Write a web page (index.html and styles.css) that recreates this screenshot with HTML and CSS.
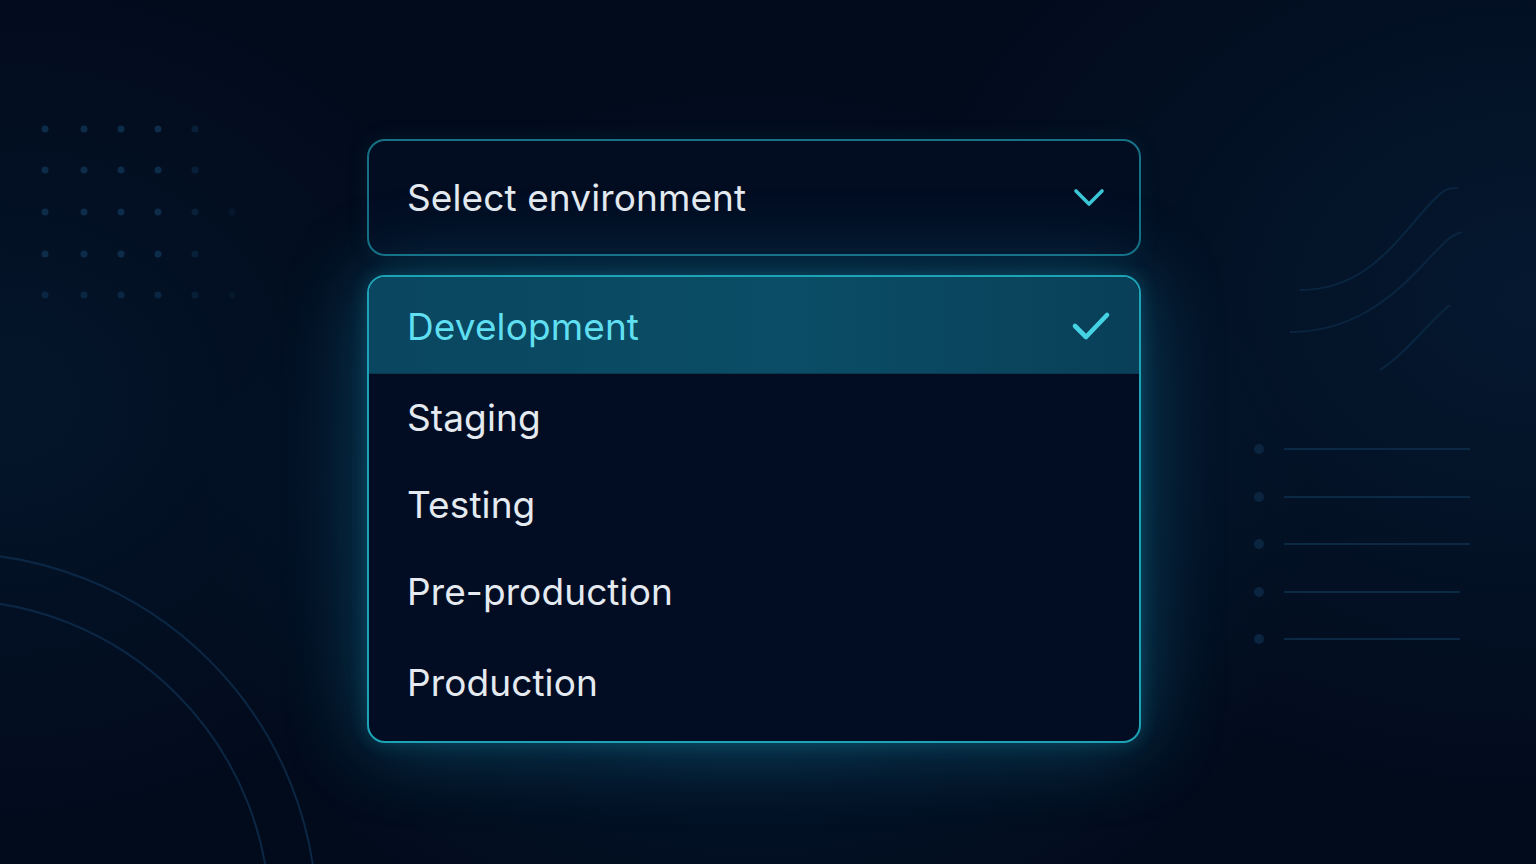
FILE: index.html
```html
<!DOCTYPE html>
<html lang="en">
<head>
<meta charset="utf-8">
<title>Select environment</title>
<link rel="stylesheet" href="styles.css">
</head>
<body>
<svg class="bg-deco" width="1536" height="864" viewBox="0 0 1536 864" aria-hidden="true">
  <g fill="#0d2c4a">
    <circle cx="45" cy="129" r="3.5"/><circle cx="84" cy="129" r="3.5"/><circle cx="121" cy="129" r="3.5"/><circle cx="158" cy="129" r="3.5"/><circle cx="195" cy="129" r="3.5" opacity=".6"/>
    <circle cx="45" cy="170" r="3.5"/><circle cx="84" cy="170" r="3.5"/><circle cx="121" cy="170" r="3.5"/><circle cx="158" cy="170" r="3.5"/><circle cx="195" cy="170" r="3.5" opacity=".6"/>
    <circle cx="45" cy="212" r="3.5"/><circle cx="84" cy="212" r="3.5"/><circle cx="121" cy="212" r="3.5"/><circle cx="158" cy="212" r="3.5"/><circle cx="195" cy="212" r="3.5" opacity=".6"/><circle cx="232" cy="212" r="3.5" opacity=".3"/>
    <circle cx="45" cy="254" r="3.5"/><circle cx="84" cy="254" r="3.5"/><circle cx="121" cy="254" r="3.5"/><circle cx="158" cy="254" r="3.5"/><circle cx="195" cy="254" r="3.5" opacity=".6"/>
    <circle cx="45" cy="295" r="3.5" opacity=".8"/><circle cx="84" cy="295" r="3.5" opacity=".8"/><circle cx="121" cy="295" r="3.5" opacity=".8"/><circle cx="158" cy="295" r="3.5" opacity=".8"/><circle cx="195" cy="295" r="3.5" opacity=".5"/><circle cx="232" cy="295" r="3.5" opacity=".3"/>
  </g>
  <g fill="none" stroke="#0a2540" stroke-width="2">
    <path d="M1300 290 C 1360 290, 1390 250, 1420 215 S 1450 190, 1458 188"/>
    <path d="M1290 332 C 1350 332, 1390 300, 1420 268 S 1450 236, 1462 232"/>
    <path d="M1380 370 C 1410 350, 1430 320, 1450 305"/>
  </g>
  <g fill="#0b2540">
    <circle cx="1259" cy="449" r="5"/><circle cx="1259" cy="497" r="5"/><circle cx="1259" cy="544" r="5"/><circle cx="1259" cy="592" r="5"/><circle cx="1259" cy="639" r="5"/>
  </g>
  <g stroke="#0b2844" stroke-width="2">
    <line x1="1284" y1="449" x2="1470" y2="449"/><line x1="1284" y1="497" x2="1470" y2="497"/><line x1="1284" y1="544" x2="1470" y2="544"/><line x1="1284" y1="592" x2="1460" y2="592"/><line x1="1284" y1="639" x2="1460" y2="639"/>
  </g>
  <g fill="none" stroke="#0b2744" stroke-width="2">
    <circle cx="-50" cy="920" r="367"/>
    <circle cx="-50" cy="920" r="320"/>
  </g>
</svg>

<main class="stage">
  <div class="select">
    <button class="trigger" type="button">
      <span class="trigger-label">Select environment</span>
      <svg class="chevron" width="32" height="20" viewBox="0 0 32 20" aria-hidden="true">
        <polyline points="3,3 16,16 29,3" fill="none" stroke="#3cc6d6" stroke-width="3.6" stroke-linecap="round" stroke-linejoin="round"/>
      </svg>
    </button>
    <ul class="menu" role="listbox">
      <li class="option option-selected" role="option" aria-selected="true">
        <span>Development</span>
        <svg class="check" width="40" height="30" viewBox="0 0 40 30" aria-hidden="true">
          <polyline points="4,15 15,26 36,4" fill="none" stroke="#45d3e3" stroke-width="4.6" stroke-linecap="round" stroke-linejoin="round"/>
        </svg>
      </li>
      <li class="option" role="option">Staging</li>
      <li class="option" role="option">Testing</li>
      <li class="option" role="option">Pre-production</li>
      <li class="option option-last" role="option">Production</li>
    </ul>
  </div>
</main>
</body>
</html>
```

FILE: styles.css
```css
html, body {
  margin: 0;
  padding: 0;
}

body {
  width: 1536px;
  height: 864px;
  overflow: hidden;
  position: relative;
  font-family: Inter, "Noto Sans", "Liberation Sans", sans-serif;
  background:
    radial-gradient(ellipse 560px 440px at 754px 530px, rgba(18, 92, 128, 0.6), rgba(6, 40, 70, 0.25) 60%, rgba(2, 12, 30, 0) 100%),
    radial-gradient(ellipse 900px 700px at 1536px 300px, rgba(10, 50, 85, 0.35), rgba(2, 12, 30, 0) 70%),
    radial-gradient(ellipse 700px 600px at 0px 400px, rgba(8, 40, 70, 0.35), rgba(2, 12, 30, 0) 70%),
    #020b1c;
}

.bg-deco {
  position: absolute;
  left: 0;
  top: 0;
  pointer-events: none;
}

.stage {
  position: relative;
  display: flex;
  padding-top: 139px;
  padding-left: 367px;
}

.select {
  width: 774px;
  display: flex;
  flex-direction: column;
  gap: 19px;
}

.trigger {
  height: 117px;
  box-sizing: border-box;
  display: flex;
  align-items: center;
  justify-content: space-between;
  padding: 0 34px 0 38px;
  background: #020d22;
  border: 2px solid #177084;
  border-radius: 18px;
  font: inherit;
  color: #e4eaf0;
  cursor: pointer;
  box-shadow: 0 0 20px rgba(10, 70, 100, 0.2);
}

.trigger-label {
  font-size: 37px;
  letter-spacing: 0.1px;
}

.chevron {
  display: block;
}

.menu {
  list-style: none;
  margin: 0;
  padding: 0 0 16px;
  background: #020d24;
  border: 2px solid #1ea2b6;
  border-radius: 18px;
  overflow: hidden;
  box-shadow: 0 0 80px rgba(22, 140, 175, 0.42), 0 0 18px rgba(30, 160, 190, 0.28);
}

.option {
  height: 87px;
  display: flex;
  align-items: center;
  justify-content: space-between;
  padding: 0 28px 0 38px;
  font-size: 37px;
  letter-spacing: 0.1px;
  color: #e4eaf0;
}

.option-last {
  height: 90px;
  padding-top: 4px;
  box-sizing: border-box;
}

.option-selected {
  height: 97px;
  color: #5fdff0;
  background: linear-gradient(90deg, #0a465f 0%, #0b4d66 55%, #093f58 100%);
  border-bottom: 1px solid #0a3650;
  box-sizing: border-box;
  padding-top: 2px;
}

.check {
  display: block;
}
```
